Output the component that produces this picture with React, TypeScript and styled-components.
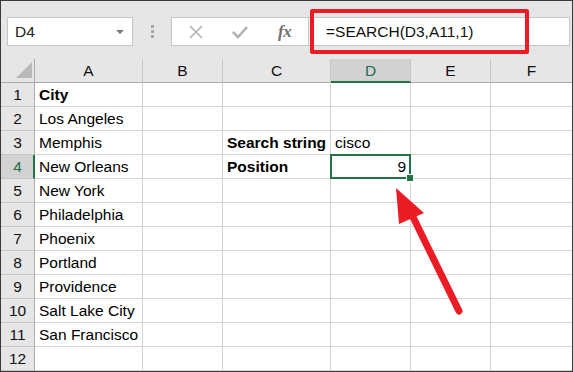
import React from "react";
import styled, { createGlobalStyle } from "styled-components";

const GlobalStyle = createGlobalStyle`
  html, body {
    margin: 0;
    padding: 0;
    background: #ffffff;
  }
  * {
    box-sizing: border-box;
  }
`;

const columns = [
  { name: "A", width: 108 },
  { name: "B", width: 80 },
  { name: "C", width: 108 },
  { name: "D", width: 80 },
  { name: "E", width: 80 },
  { name: "F", width: 81 }
];

interface CellData {
  text: string;
  bold?: boolean;
  right?: boolean;
}

const rows: Record<number, Record<string, CellData>> = {
  1: { A: { text: "City", bold: true } },
  2: { A: { text: "Los Angeles" } },
  3: {
    A: { text: "Memphis" },
    C: { text: "Search string", bold: true },
    D: { text: "cisco" }
  },
  4: {
    A: { text: "New Orleans" },
    C: { text: "Position", bold: true },
    D: { text: "9", right: true }
  },
  5: { A: { text: "New York" } },
  6: { A: { text: "Philadelphia" } },
  7: { A: { text: "Phoenix" } },
  8: { A: { text: "Portland" } },
  9: { A: { text: "Providence" } },
  10: { A: { text: "Salt Lake City" } },
  11: { A: { text: "San Francisco" } },
  12: {}
};

const Frame = styled.div`
  position: relative;
  width: 573px;
  height: 372px;
  border: 1px solid #3a3a3a;
  background: #e6e6e6;
  font-family: "Liberation Sans", Arial, sans-serif;
  overflow: hidden;
`;

const Toolbar = styled.div`
  height: 58px;
  display: flex;
  align-items: flex-start;
  padding: 16px 2px 0 6px;
`;

const NameBox = styled.div`
  width: 126px;
  height: 29px;
  background: #ffffff;
  border: 1px solid #c6c6c6;
  display: flex;
  align-items: center;
  justify-content: space-between;
  padding: 0 8px 0 7px;
  font-size: 15.5px;
  color: #222;
`;

const DropArrow = styled.span`
  width: 0;
  height: 0;
  border-left: 4px solid transparent;
  border-right: 4px solid transparent;
  border-top: 4px solid #7a7a7a;
`;

const Grip = styled.div`
  width: 38px;
  height: 29px;
  display: flex;
  flex-direction: column;
  align-items: center;
  justify-content: center;
  gap: 2px;
  span {
    width: 3px;
    height: 3px;
    background: #a6a6a6;
  }
`;

const IconBox = styled.div`
  width: 137px;
  height: 29px;
  background: #ffffff;
  border: 1px solid #c6c6c6;
  border-right: none;
  display: flex;
  align-items: center;
  padding-left: 16px;
`;

const IconSlot = styled.div`
  width: 43px;
  height: 27px;
  display: flex;
  align-items: center;
  justify-content: flex-start;
`;

const Fx = styled.span`
  font-family: "Liberation Serif", "Times New Roman", serif;
  font-style: italic;
  font-weight: 700;
  font-size: 17px;
  color: #707070;
  margin-left: 4px;
  letter-spacing: -0.5px;
`;

const FormulaInput = styled.div`
  flex: 1;
  height: 29px;
  background: #ffffff;
  border: 1px solid #c6c6c6;
  display: flex;
  align-items: center;
  padding-left: 17px;
  font-size: 15.5px;
  color: #111;
`;

const Callout = styled.div`
  position: absolute;
  left: 309px;
  top: 8px;
  width: 219px;
  height: 45px;
  border: 4px solid #ec1c24;
  border-radius: 2px;
`;

const Sheet = styled.div`
  display: grid;
  grid-template-columns: 34px ${columns.map((c) => c.width + "px").join(" ")};
  grid-auto-rows: 24px;
  background: #ffffff;
`;

const Corner = styled.div`
  background: #e6e6e6;
  border-right: 1px solid #ababab;
  border-bottom: 1px solid #ababab;
  position: relative;
  &::after {
    content: "";
    position: absolute;
    right: 2px;
    bottom: 4px;
    width: 0;
    height: 0;
    border-left: 16px solid transparent;
    border-bottom: 16px solid #b9b9b9;
  }
`;

const ColHead = styled.div<{ $active?: boolean; $last?: boolean }>`
  background: ${(p) => (p.$active ? "#d2d2d2" : "#e6e6e6")};
  border-right: ${(p) => (p.$last ? "none" : "1px solid #c6c6c6")};
  border-bottom: ${(p) => (p.$active ? "2px solid #217346" : "1px solid #ababab")};
  display: flex;
  align-items: center;
  justify-content: center;
  font-size: 15.5px;
  color: ${(p) => (p.$active ? "#1f6b50" : "#111")};
  padding-top: ${(p) => (p.$active ? "1px" : "0")};
`;

const RowHead = styled.div<{ $active?: boolean }>`
  background: ${(p) => (p.$active ? "#d2d2d2" : "#e6e6e6")};
  border-right: ${(p) => (p.$active ? "2px solid #217346" : "1px solid #ababab")};
  border-bottom: 1px solid #c6c6c6;
  display: flex;
  align-items: center;
  justify-content: center;
  font-size: 15.5px;
  color: ${(p) => (p.$active ? "#1f6b50" : "#111")};
  padding-left: ${(p) => (p.$active ? "1px" : "0")};
`;

const Cell = styled.div<{
  $bold?: boolean;
  $right?: boolean;
  $selected?: boolean;
  $last?: boolean;
}>`
  position: relative;
  border-right: ${(p) => (p.$last ? "none" : "1px solid #d4d4d4")};
  border-bottom: 1px solid #d4d4d4;
  display: flex;
  align-items: center;
  justify-content: ${(p) => (p.$right ? "flex-end" : "flex-start")};
  padding: 1px 4px 0 4px;
  font-size: 15.5px;
  font-weight: ${(p) => (p.$bold ? 700 : 400)};
  color: #000;
  white-space: nowrap;
  overflow: visible;
  z-index: ${(p) => (p.$selected ? 2 : 1)};
  ${(p) =>
    p.$selected &&
    `
    &::before {
      content: "";
      position: absolute;
      left: -1px;
      top: -1px;
      right: -1px;
      bottom: -1px;
      border: 2px solid #217346;
      pointer-events: none;
    }
    &::after {
      content: "";
      position: absolute;
      right: -4px;
      bottom: -4px;
      width: 6px;
      height: 6px;
      background: #217346;
      border: 1px solid #ffffff;
    }
  `}
`;

const ArrowLayer = styled.svg`
  position: absolute;
  left: 0;
  top: 0;
  pointer-events: none;
  z-index: 5;
`;

const App = () => {
  return (
    <>
      <GlobalStyle />
      <Frame>
        <Toolbar>
          <NameBox>
            D4
            <DropArrow />
          </NameBox>
          <Grip>
            <span />
            <span />
            <span />
          </Grip>
          <IconBox>
            <IconSlot>
              <svg width="16" height="16" viewBox="0 0 16 16">
                <path
                  d="M2 2 L14 14 M14 2 L2 14"
                  stroke="#b3b3b3"
                  strokeWidth="1.6"
                  fill="none"
                />
              </svg>
            </IconSlot>
            <IconSlot>
              <svg width="18" height="16" viewBox="0 0 18 16">
                <path
                  d="M2 8 L7 13 L16 3"
                  stroke="#b3b3b3"
                  strokeWidth="2.6"
                  fill="none"
                />
              </svg>
            </IconSlot>
            <Fx>fx</Fx>
          </IconBox>
          <FormulaInput>=SEARCH(D3,A11,1)</FormulaInput>
        </Toolbar>
        <Callout />
        <Sheet>
          <Corner />
          {columns.map((c, ci) => (
            <ColHead
              key={`col-${c.name}`}
              $active={c.name === "D"}
              $last={ci === columns.length - 1}
            >
              {c.name}
            </ColHead>
          ))}
          {Object.keys(rows).map((rk) => {
            const r = Number(rk);
            return (
              <React.Fragment key={`row-${r}`}>
                <RowHead $active={r === 4}>{r}</RowHead>
                {columns.map((c, ci) => {
                  const data = rows[r][c.name];
                  return (
                    <Cell
                      key={`cell-${r}-${c.name}`}
                      $bold={data?.bold}
                      $right={data?.right}
                      $selected={r === 4 && c.name === "D"}
                      $last={ci === columns.length - 1}
                    >
                      {data?.text}
                    </Cell>
                  );
                })}
              </React.Fragment>
            );
          })}
        </Sheet>
        <ArrowLayer width="573" height="372" viewBox="0 0 573 372">
          <line
            x1="458"
            y1="310"
            x2="412"
            y2="216"
            stroke="#ec1c24"
            strokeWidth="7"
            strokeLinecap="round"
          />
          <polygon points="395,187 423,212 398,223" fill="#ec1c24" />
        </ArrowLayer>
      </Frame>
    </>
  );
};

export default App;
